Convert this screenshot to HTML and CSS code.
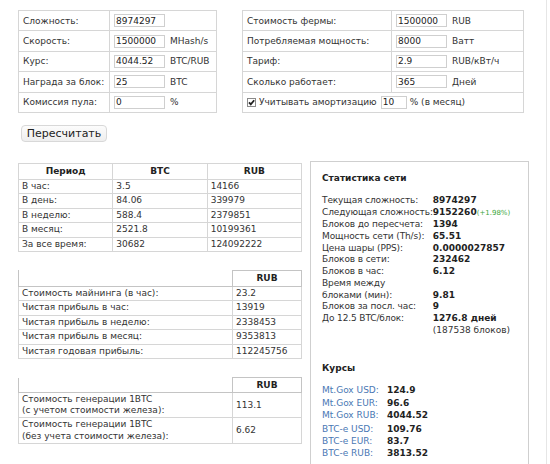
FILE: index.html
```html
<!DOCTYPE html>
<html lang="ru">
<head>
<meta charset="utf-8">
<title>Калькулятор майнинга</title>
<link rel="stylesheet" href="styles.css">
</head>
<body>
<div class="page">
  <div class="inputs">
    <table class="form form-left">
      <tr><td class="lbl">Сложность:</td><td><input class="fld" value="8974297"></td></tr>
      <tr><td class="lbl">Скорость:</td><td><input class="fld" value="1500000"><span class="unit">MHash/s</span></td></tr>
      <tr><td class="lbl">Курс:</td><td><input class="fld" value="4044.52"><span class="unit">BTC/RUB</span></td></tr>
      <tr><td class="lbl">Награда за блок:</td><td><input class="fld" value="25"><span class="unit">BTC</span></td></tr>
      <tr><td class="lbl">Комиссия пула:</td><td><input class="fld" value="0"><span class="unit">%</span></td></tr>
    </table>
    <table class="form form-right">
      <tr><td class="lbl">Стоимость фермы:</td><td><input class="fld" value="1500000"><span class="unit">RUB</span></td></tr>
      <tr><td class="lbl">Потребляемая мощность:</td><td><input class="fld" value="8000"><span class="unit">Ватт</span></td></tr>
      <tr><td class="lbl">Тариф:</td><td><input class="fld" value="2.9"><span class="unit">RUB/кВт/ч</span></td></tr>
      <tr><td class="lbl">Сколько работает:</td><td><input class="fld" value="365"><span class="unit">Дней</span></td></tr>
      <tr><td class="chk-cell" colspan="2">
        <div class="chk-row">
          <span class="chk"><svg viewBox="0 0 9 9" width="9" height="9"><rect x="0.5" y="0.5" width="8" height="8" fill="#fff" stroke="#8a8a8a"/><path d="M2 4.3 L3.8 6.4 L7.2 2.2" fill="none" stroke="#222" stroke-width="1.8"/></svg></span>
          <span class="chk-text">Учитывать амортизацию</span>
          <input class="fld fld-small" value="10">
          <span>% (в месяц)</span>
        </div>
      </td></tr>
    </table>
  </div>

  <button class="recalc" type="button">Пересчитать</button>

  <div class="results">
    <div class="left-col">
      <table class="res res-main">
        <tr><th>Период</th><th>BTC</th><th>RUB</th></tr>
        <tr><td>В час:</td><td>3.5</td><td>14166</td></tr>
        <tr><td>В день:</td><td>84.06</td><td>339979</td></tr>
        <tr><td>В неделю:</td><td>588.4</td><td>2379851</td></tr>
        <tr><td>В месяц:</td><td>2521.8</td><td>10199361</td></tr>
        <tr><td>За все время:</td><td>30682</td><td>124092222</td></tr>
      </table>

      <table class="res res-profit">
        <tr><th class="blank"></th><th class="val-col">RUB</th></tr>
        <tr><td>Стоимость майнинга (в час):</td><td>23.2</td></tr>
        <tr><td>Чистая прибыль в час:</td><td>13919</td></tr>
        <tr><td>Чистая прибыль в неделю:</td><td>2338453</td></tr>
        <tr><td>Чистая прибыль в месяц:</td><td>9353813</td></tr>
        <tr><td>Чистая годовая прибыль:</td><td>112245756</td></tr>
      </table>

      <table class="res res-cost">
        <tr><th class="blank"></th><th class="val-col">RUB</th></tr>
        <tr><td class="two">Стоимость генерации 1BTC<br>(с учетом стоимости железа):</td><td>113.1</td></tr>
        <tr><td class="two">Стоимость генерации 1BTC<br>(без учета стоимости железа):</td><td>6.62</td></tr>
      </table>
    </div>

    <div class="stats">
      <div class="stats-title">Статистика сети</div>
      <table class="kv">
        <tr><td class="k">Текущая сложность:</td><td class="v">8974297</td></tr>
        <tr><td class="k">Следующая сложность:</td><td class="v">9152260<span class="delta">(+1.98%)</span></td></tr>
        <tr><td class="k">Блоков до пересчета:</td><td class="v">1394</td></tr>
        <tr><td class="k">Мощность сети (Th/s):</td><td class="v">65.51</td></tr>
        <tr><td class="k">Цена шары (PPS):</td><td class="v">0.0000027857</td></tr>
        <tr><td class="k">Блоков в сети:</td><td class="v">232462</td></tr>
        <tr><td class="k">Блоков в час:</td><td class="v">6.12</td></tr>
        <tr><td class="k">Время между<br>блоками (мин):</td><td class="v bottom">9.81</td></tr>
        <tr><td class="k">Блоков за посл. час:</td><td class="v">9</td></tr>
        <tr><td class="k">До 12.5 BTC/блок:</td><td class="v">1276.8 дней<br><span class="note">(187538 блоков)</span></td></tr>
      </table>

      <div class="stats-title rates-title">Курсы</div>
      <table class="kv rates">
        <tr><td class="k">Mt.Gox USD:</td><td class="v">124.9</td></tr>
        <tr><td class="k">Mt.Gox EUR:</td><td class="v">96.6</td></tr>
        <tr><td class="k">Mt.Gox RUB:</td><td class="v">4044.52</td></tr>
        <tr class="group-start"><td class="k">BTC-e USD:</td><td class="v">109.76</td></tr>
        <tr><td class="k">BTC-e EUR:</td><td class="v">83.7</td></tr>
        <tr><td class="k">BTC-e RUB:</td><td class="v">3813.52</td></tr>
      </table>
    </div>
  </div>
</div>
</body>
</html>
```

FILE: styles.css
```css
html, body {
  margin: 0;
  padding: 0;
  background: #fff;
}

body {
  font-family: "DejaVu Sans", Verdana, sans-serif;
  font-size: 9px;
  color: #333;
}

.page {
  width: 547px;
  min-height: 464px;
  border-right: 1px solid #e6e6e6;
  box-sizing: border-box;
  padding: 10px 0 0 18px;
}

.inputs {
  display: flex;
  align-items: flex-start;
  gap: 25px;
}

table {
  border-collapse: collapse;
}

.form {
  border: 1px solid #c4c4c4;
}

.form td {
  border: 1px solid #d6d6d6;
  height: 19.4px;
  padding: 0 4px;
  vertical-align: middle;
  white-space: nowrap;
}

.form-left { width: 199px; }
.form-left .lbl { width: 82px; }
.form-right { width: 282px; }
.form-right .lbl { width: 140px; }

.fld {
  box-sizing: border-box;
  width: 51px;
  height: 13px;
  border: 1px solid #cfcfcf;
  padding: 0 1px;
  margin: 0;
  font-family: "DejaVu Sans", Verdana, sans-serif;
  font-size: 9px;
  color: #222;
  vertical-align: middle;
}

.unit {
  margin-left: 5px;
  vertical-align: middle;
}

.chk-cell {
  padding-left: 6px;
}

.chk-row {
  display: flex;
  align-items: center;
}

.chk {
  width: 9px;
  height: 9px;
  margin-right: 3px;
}

.chk svg { display: block; }

.fld-small {
  width: 26px;
  margin: 0 3px 0 4px;
}

.recalc {
  display: block;
  margin: 12px 0 0 3px;
  width: 86px;
  height: 17px;
  padding: 0;
  border: 1px solid #d8d8d8;
  border-radius: 4px;
  background: linear-gradient(#fcfcfc, #eeeeee);
  font-family: "DejaVu Sans", Verdana, sans-serif;
  font-size: 11px;
  color: #222;
}

.results {
  display: flex;
  align-items: flex-start;
  gap: 8px;
  margin-top: 19px;
}

.left-col {
  width: 284px;
  padding-top: 2px;
  display: flex;
  flex-direction: column;
}

.res {
  width: 284px;
  border: 1px solid #c4c4c4;
}

.res th, .res td {
  border: 1px solid #d6d6d6;
  padding: 0 3px;
  text-align: left;
  font-weight: normal;
  line-height: 13.4px;
  white-space: nowrap;
}

.res th {
  font-weight: bold;
  text-align: center;
  line-height: 15px;
  color: #222;
}

.res-main td, .res-main th { width: 33.3%; }

.res-profit, .res-cost {
  border-top: none;
}

.res-profit { margin-top: 18px; }
.res-cost { margin-top: 18px; }

.res th.blank {
  border: none;
  border-bottom: 1px solid #c4c4c4;
}

.res th.val-col {
  width: 62px;
  border: 1px solid #c4c4c4;
}

.res-cost th {
  line-height: 14px;
}

.res td.two {
  padding-top: 1px;
  padding-bottom: 1px;
  line-height: 11.2px;
}

.stats {
  width: 219px;
  min-height: 310px;
  box-sizing: border-box;
  border: 1px solid #cfcfcf;
  padding: 10px 11px;
}

.stats-title {
  font-weight: bold;
  color: #222;
  line-height: 12px;
}

.kv {
  margin-top: 11px;
}

.kv td {
  padding: 0;
  line-height: 11.7px;
  vertical-align: top;
  white-space: nowrap;
}

.kv .k {
  width: 110px;
  letter-spacing: -0.12px;
}

.kv .v {
  font-weight: bold;
  color: #222;
}

.kv .v.bottom { vertical-align: bottom; }

.delta {
  font-weight: normal;
  font-size: 7px;
  color: #3aa63a;
}

.note {
  font-weight: normal;
  color: #333;
}

.rates-title {
  margin-top: 26px;
}

.rates {
  margin-top: 10px;
}

.rates td {
  line-height: 12.2px;
}

.rates .k {
  width: 65px;
  letter-spacing: 0;
  color: #4a78b4;
}

.rates tr.group-start td {
  padding-top: 2px;
}
```
